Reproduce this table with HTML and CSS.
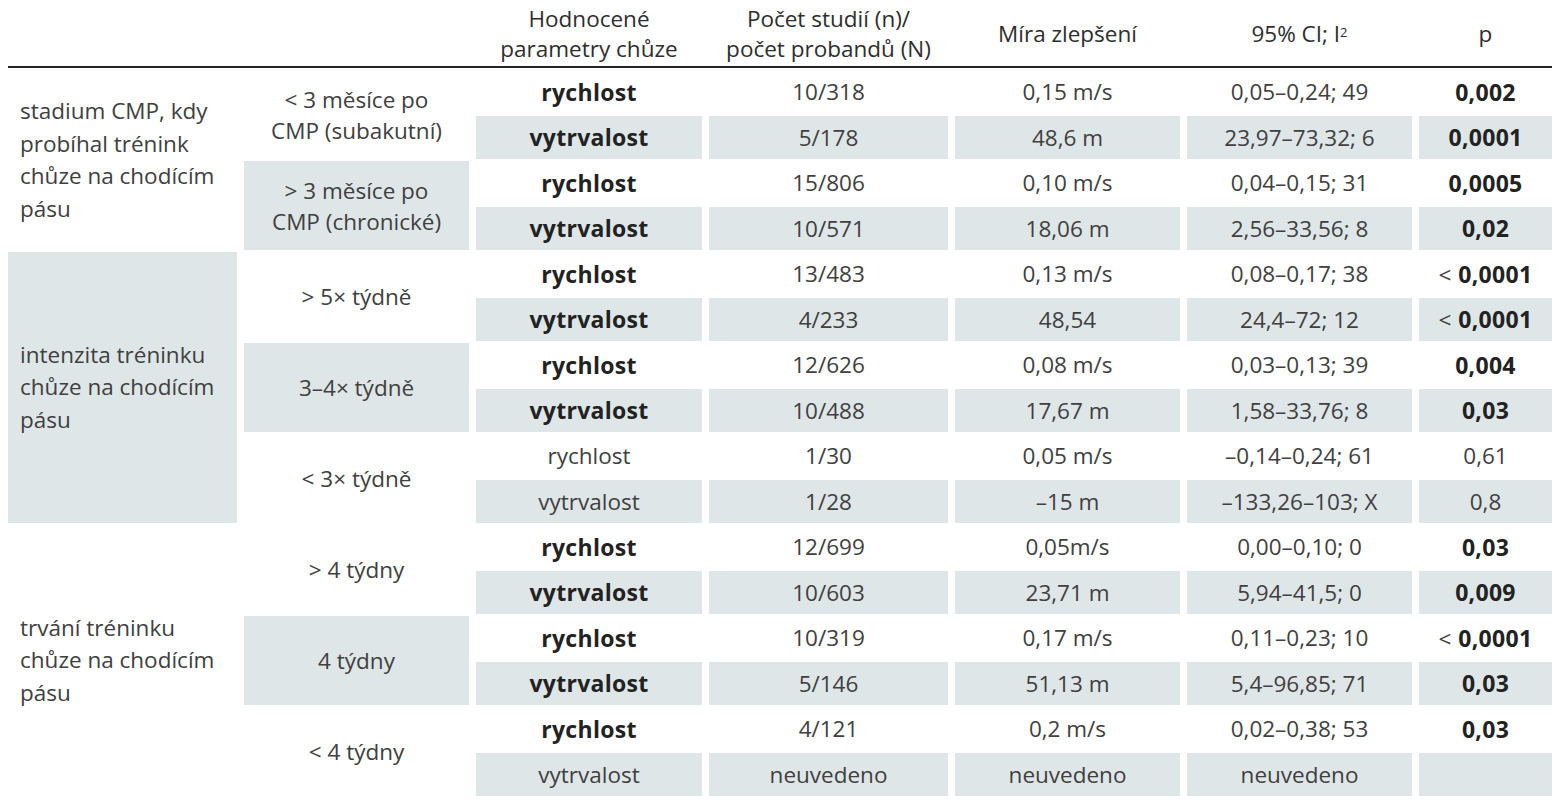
FILE: index.html
```html
<!DOCTYPE html>
<html lang="cs">
<head>
<meta charset="utf-8">
<title>Tabulka</title>
<link rel="stylesheet" href="styles.css">
</head>
<body>
<div class="tbl">
  <div class="hd"></div>
  <div class="hd"></div>
  <div class="hd">Hodnocené<br>parametry chůze</div>
  <div class="hd">Počet studií (n)/<br>počet probandů (N)</div>
  <div class="hd">Míra zlepšení</div>
  <div class="hd">95% CI; I<sup>2</sup></div>
  <div class="hd">p</div>
  <div class="rule"></div>

  <!-- group 1 -->
  <div class="grp g4">stadium CMP, kdy<br>probíhal trénink<br>chůze na chodícím<br>pásu</div>
  <div class="sub">&lt; 3 měsíce po<br>CMP (subakutní)</div>
  <div class="c b">rychlost</div><div class="c">10/318</div><div class="c">0,15 m/s</div><div class="c">0,05–0,24; 49</div><div class="c b">0,002</div>
  <div class="c s b">vytrvalost</div><div class="c s">5/178</div><div class="c s">48,6 m</div><div class="c s">23,97–73,32; 6</div><div class="c s b">0,0001</div>
  <div class="sub s">&gt; 3 měsíce po<br>CMP (chronické)</div>
  <div class="c b">rychlost</div><div class="c">15/806</div><div class="c">0,10 m/s</div><div class="c">0,04–0,15; 31</div><div class="c b">0,0005</div>
  <div class="c s b">vytrvalost</div><div class="c s">10/571</div><div class="c s">18,06 m</div><div class="c s">2,56–33,56; 8</div><div class="c s b">0,02</div>

  <!-- group 2 -->
  <div class="grp g6 s">intenzita tréninku<br>chůze na chodícím<br>pásu</div>
  <div class="sub">&gt; 5× týdně</div>
  <div class="c b">rychlost</div><div class="c">13/483</div><div class="c">0,13 m/s</div><div class="c">0,08–0,17; 38</div><div class="c"><span><span class="lt">&lt;</span> <b>0,0001</b></span></div>
  <div class="c s b">vytrvalost</div><div class="c s">4/233</div><div class="c s">48,54</div><div class="c s">24,4–72; 12</div><div class="c s"><span><span class="lt">&lt;</span> <b>0,0001</b></span></div>
  <div class="sub s">3–4× týdně</div>
  <div class="c b">rychlost</div><div class="c">12/626</div><div class="c">0,08 m/s</div><div class="c">0,03–0,13; 39</div><div class="c b">0,004</div>
  <div class="c s b">vytrvalost</div><div class="c s">10/488</div><div class="c s">17,67 m</div><div class="c s">1,58–33,76; 8</div><div class="c s b">0,03</div>
  <div class="sub">&lt; 3× týdně</div>
  <div class="c">rychlost</div><div class="c">1/30</div><div class="c">0,05 m/s</div><div class="c">–0,14–0,24; 61</div><div class="c">0,61</div>
  <div class="c s">vytrvalost</div><div class="c s">1/28</div><div class="c s">–15 m</div><div class="c s">–133,26–103; X</div><div class="c s">0,8</div>

  <!-- group 3 -->
  <div class="grp g6">trvání tréninku<br>chůze na chodícím<br>pásu</div>
  <div class="sub">&gt; 4 týdny</div>
  <div class="c b">rychlost</div><div class="c">12/699</div><div class="c">0,05m/s</div><div class="c">0,00–0,10; 0</div><div class="c b">0,03</div>
  <div class="c s b">vytrvalost</div><div class="c s">10/603</div><div class="c s">23,71 m</div><div class="c s">5,94–41,5; 0</div><div class="c s b">0,009</div>
  <div class="sub s">4 týdny</div>
  <div class="c b">rychlost</div><div class="c">10/319</div><div class="c">0,17 m/s</div><div class="c">0,11–0,23; 10</div><div class="c"><span><span class="lt">&lt;</span> <b>0,0001</b></span></div>
  <div class="c s b">vytrvalost</div><div class="c s">5/146</div><div class="c s">51,13 m</div><div class="c s">5,4–96,85; 71</div><div class="c s b">0,03</div>
  <div class="sub">&lt; 4 týdny</div>
  <div class="c b">rychlost</div><div class="c">4/121</div><div class="c">0,2 m/s</div><div class="c">0,02–0,38; 53</div><div class="c b">0,03</div>
  <div class="c s">vytrvalost</div><div class="c s">neuvedeno</div><div class="c s">neuvedeno</div><div class="c s">neuvedeno</div><div class="c s"></div>
</div>
</body>
</html>
```

FILE: styles.css
```css
html, body {
  margin: 0;
  padding: 0;
  background: #ffffff;
}

body {
  font-family: "Open Sans", "Noto Sans", sans-serif;
  font-size: 22.5px;
  color: #404040;
}

.tbl {
  display: grid;
  grid-template-columns: 229px 225px 226px 239px 225px 225px 133px;
  grid-template-rows: 64px 2px repeat(16, 43.5px);
  column-gap: 7px;
  row-gap: 2px;
  margin-left: 8px;
  width: 1545px;
}

.hd {
  display: flex;
  align-items: center;
  justify-content: center;
  text-align: center;
  line-height: 30px;
  padding-top: 3px;
  color: #2e2e2e;
}

.hd sup {
  font-size: 13px;
  line-height: 0;
  position: relative;
  top: -2px;
  vertical-align: super;
}

.rule {
  grid-column: 1 / -1;
  background: #262626;
}

.grp {
  grid-column: 1;
  display: flex;
  align-items: center;
  padding-left: 12px;
  line-height: 32.5px;
}

.g4 {
  grid-row: span 4;
}

.g6 {
  grid-row: span 6;
}

.sub {
  grid-column: 2;
  grid-row: span 2;
  display: flex;
  align-items: center;
  justify-content: center;
  text-align: center;
  line-height: 31px;
}

.c {
  display: flex;
  align-items: center;
  justify-content: center;
  white-space: nowrap;
}

.s {
  background: #dfe6e7;
}

.b,
.c b {
  font-weight: 700;
  font-size: 23px;
  letter-spacing: 0.3px;
  color: #222222;
}

.lt {
  margin-right: 1px;
}
```
